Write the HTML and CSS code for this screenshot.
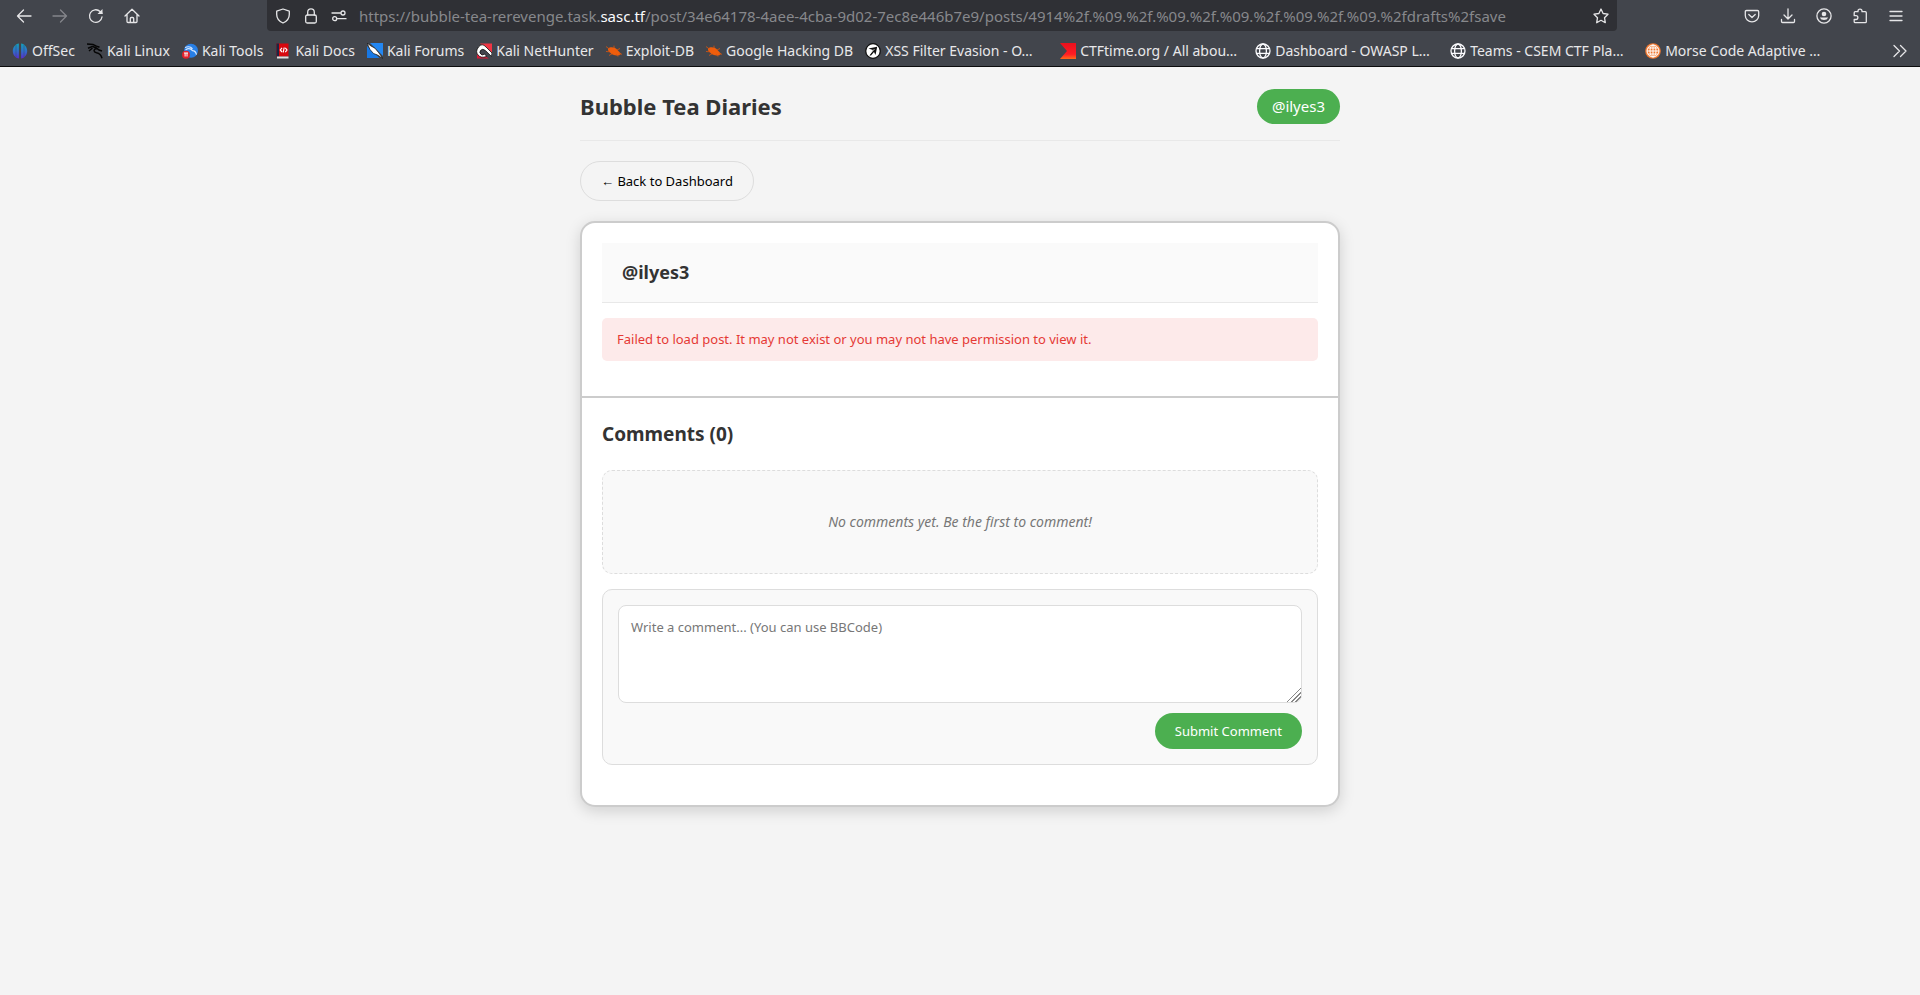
FILE: index.html
```html
<!DOCTYPE html>
<html lang="en">
<head>
<meta charset="utf-8">
<title>Bubble Tea Diaries</title>
<link rel="stylesheet" href="styles.css">
</head>
<body>
<svg class="defs" aria-hidden="true">
  <defs>
    <linearGradient id="offsec" x1="0" y1="0" x2="0" y2="1"><stop offset="0" stop-color="#12a0b8"/><stop offset=".5" stop-color="#2f6fc9"/><stop offset="1" stop-color="#5a2bd0"/></linearGradient>
    <linearGradient id="ctf" x1="0" y1="0" x2="0" y2="1"><stop offset="0" stop-color="#e8101c"/><stop offset=".7" stop-color="#ff1c24"/><stop offset="1" stop-color="#ff6a1a"/></linearGradient>
    <symbol id="globe" viewBox="0 0 16 16"><g fill="none" stroke="#fbfbfe" stroke-width="1.3"><circle cx="8" cy="8" r="7"/><ellipse cx="8" cy="8" rx="3.4" ry="7"/><path d="M1.5 5.6h13M1.5 10.4h13"/></g></symbol>
    <symbol id="bug" viewBox="0 0 16 16"><path d="M2 5.500C4.500 3.300 9 4.300 11 6.500l4 4.200-1.600 1.500c-3 1-7.500-.2-9.100-2.400C2.300 8.300 1.800 7 2 5.500z" fill="#ee5d0c"/><path d="M0 3.500l4 3M0 8.500l4 .3M3 12.500l3.500-2M8 5V2.600M11 7l3-1.500M10 11l2 2.600M13 10.500l3 .8" stroke="#d9560f" stroke-width=".8" fill="none"/></symbol>
  </defs>
</svg>
<header class="browser">
  <nav class="toolbar" aria-label="Navigation">
    <div class="nav-buttons">
      <button class="tool" aria-label="Back"><svg viewBox="0 0 16 16"><path d="M15 8H1.500M7.500 2 1.500 8l6 6"/></svg></button>
      <button class="tool dim" aria-label="Forward"><svg viewBox="0 0 16 16"><path d="M1 8h13.500M8.500 2l6 6-6 6"/></svg></button>
      <button class="tool" aria-label="Reload"><svg viewBox="0 0 16 16"><path d="M14 9a6.300 6.300 0 1 1-1.900-5.500L14 5.300"/><path d="M14.500 1v5h-5z" class="solid"/></svg></button>
      <button class="tool" aria-label="Home"><svg viewBox="0 0 16 16"><path d="M1 8l7-6.700L15 8M3 6.500V13.500q0 1 1 1h8q1 0 1-1V6.500M6.300 14.500v-4q0-1 1-1h1.400q1 0 1 1v4"/></svg></button>
    </div>
    <div class="urlbar">
      <svg class="icon" viewBox="0 0 16 16"><path d="M8 1 14.300 3.200V6.500C14.300 10.500 11.500 13.500 8 15 4.500 13.500 1.700 10.500 1.700 6.500V3.200z"/></svg>
      <svg class="icon" viewBox="0 0 16 16"><rect x="2.700" y="7" width="10.600" height="8" rx="1.500"/><path d="M4.700 7V4.200a3.300 3.300 0 0 1 6.600 0V7"/></svg>
      <svg class="icon" viewBox="0 0 16 16"><path d="M1 5h8.500M6.500 10.700H15"/><circle cx="12" cy="5" r="2"/><circle cx="3.700" cy="10.700" r="2"/></svg>
      <div class="url">https://bubble-tea-rerevenge.task.<span class="domain">sasc.tf</span>/post/34e64178-4aee-4cba-9d02-7ec8e446b7e9/posts/4914%2f.%09.%2f.%09.%2f.%09.%2f.%09.%2f.%09.%2fdrafts%2fsave</div>
      <button class="tool star" aria-label="Bookmark this page"><svg viewBox="0 0 16 16"><path d="M8 1l2.100 4.500 4.900.7-3.500 3.500.8 5L8 12.300 3.700 14.700l.8-5L1 6.200l4.900-.7z"/></svg></button>
    </div>
    <div class="actions">
      <button class="tool" aria-label="Save to Pocket"><svg viewBox="0 0 16 16"><path d="M2.500 2.500h11q1.200 0 1.200 1.200V7.500a6.700 6.300 0 0 1-13.400 0V3.700q0-1.200 1.200-1.200zM4.800 6.500 8 9.500l3.200-3"/></svg></button>
      <button class="tool" aria-label="Downloads"><svg viewBox="0 0 16 16"><path d="M8 .8v10M4 7l4 4 4-4M1.500 11.500v2q0 1 1 1h11q1 0 1-1v-2"/></svg></button>
      <button class="tool" aria-label="Account"><svg viewBox="0 0 16 16"><circle cx="8" cy="8" r="7.100"/><circle cx="8" cy="6" r="2.300" class="solid"/><path d="M3.800 9.500h8.400a4.500 4 0 0 1-8.400 0z" class="solid"/></svg></button>
      <button class="tool" aria-label="Extensions"><svg viewBox="0 0 16 16"><path d="M2.200 5.500V4.700q0-1 1-1H6V3a2 1.900 0 0 1 4 0v.7h3.300q1 0 1 1v9q0 1-1 1H3.200q-1 0-1-1v-2.200H4a1.800 1.800 0 0 0 0-3.800H2.200z"/></svg></button>
      <button class="tool" aria-label="Menu"><svg viewBox="0 0 16 16"><path d="M2 3.500h12M2 8h12M2 12.500h12"/></svg></button>
    </div>
  </nav>
  <nav class="bookmarks" aria-label="Bookmarks">
    <a class="bookmark" href="#"><svg viewBox="0 0 16 16"><path d="M6.900.5v15C3.500 15 .8 12 .8 8S3.500 1 6.900.5zM9.100.5v15c3.400-.5 6.100-3.500 6.100-7.500S12.500 1 9.100.5z" fill="url(#offsec)"/><path d="M4 2v12M12 2v12" stroke="#38507e" stroke-width=".6"/></svg><span>OffSec</span></a>
    <a class="bookmark" href="#"><svg viewBox="0 0 16 16"><path d="M0 1l6 .6 3.500 1.500 3 1.200M1 5.200l4.500-1.800M2 8l3.500-3M5.500 3.500C8 4 9.500 4.500 12 7l3 1M9.500 5.500C6 6.500 6.500 9 9.500 9.700c3 .6 4.600 2 5.500 5.500" fill="none" stroke="#050505" stroke-width="1.500"/></svg><span>Kali Linux</span></a>
    <a class="bookmark" href="#"><svg viewBox="0 0 16 16"><circle cx="9" cy="7.800" r="7" fill="#287fe6"/><path d="M3 4.500q5-2 7.500 1.300M3.500 7q4-3 7 .7 3 0 4 4" fill="none" stroke="#d8e9ff" stroke-width="1.200"/><circle cx="4" cy="11.700" r="4" fill="#e3212b"/><path d="M2 10h4M3.100 10v3.500M5 10v3.500" stroke="#fff"/></svg><span>Kali Tools</span></a>
    <a class="bookmark" href="#"><svg viewBox="0 0 16 16"><path d="M1.500.5h12v13h-12z" fill="#d8070e"/><path d="M1.500.5H4v13H1.500z" fill="#1b2541"/><path d="M2 13.500h11.500v2H2z" fill="#dedede"/><path d="M7 4.800 5.300 7 7 9M10.300 4.800 12 7l-1.700 2.200M9.200 4.500 8.200 9.500" fill="none" stroke="#fff" stroke-width="1.200"/></svg><span>Kali Docs</span></a>
    <a class="bookmark" href="#"><svg viewBox="0 0 16 16"><path d="M3 0h13v13z" fill="#2387f2"/><path d="M0 3v12h12.500z" fill="#1878e4"/><path d="M0 0 4 3l4 2.200 3.500 4.300 4.500 6-5.500-3.500-4-1.500L3 6.500z" fill="#fff" stroke="#111" stroke-width=".7"/></svg><span>Kali Forums</span></a>
    <a class="bookmark" href="#"><svg viewBox="0 0 16 16"><path d="M4 .5h12v11z" fill="#f03544"/><path d="M1 9v6.500h12z" fill="#d71935"/><path d="M15.500 13.500 9.600 7.700Q6.500 5 4.500 7.500T6 12L9 11l1.500 2.500Q5 15.500 2 12T2.500 4 10 4l6 6z" fill="#fff" stroke="#111" stroke-width=".8"/></svg><span>Kali NetHunter</span></a>
    <a class="bookmark" href="#"><svg><use href="#bug"/></svg><span>Exploit-DB</span></a>
    <a class="bookmark" href="#"><svg><use href="#bug"/></svg><span>Google Hacking DB</span></a>
    <a class="bookmark" href="#"><svg viewBox="0 0 16 16"><circle cx="8" cy="8" r="7.300" fill="#fff" stroke="#111" stroke-width="1.300"/><path d="M3.500 5.500 12.200 3.700 10.500 12 9 9 6 12.500H4.500L8 7z" fill="#111"/><path d="M9.500 6 5 11" stroke="#fff" stroke-width=".7"/></svg><span class="clipped">XSS Filter Evasion - O…</span></a>
    <a class="bookmark" href="#"><svg viewBox="0 0 16 16"><path d="M0 0h16v16H0l7-8z" fill="url(#ctf)"/></svg><span class="clipped">CTFtime.org / All abou…</span></a>
    <a class="bookmark" href="#"><svg><use href="#globe"/></svg><span class="clipped">Dashboard - OWASP L…</span></a>
    <a class="bookmark" href="#"><svg><use href="#globe"/></svg><span class="clipped">Teams - CSEM CTF Pla…</span></a>
    <a class="bookmark" href="#"><svg viewBox="0 0 16 16"><circle cx="8" cy="8" r="7.800" fill="#f07830"/><g fill="none" stroke="#fff" stroke-width="1"><circle cx="8" cy="8" r="6"/><ellipse cx="8" cy="8" rx="3" ry="6"/><path d="M8 2v12M2 8h12M3 5h10M3 11h10"/></g></svg><span class="clipped">Morse Code Adaptive …</span></a>
    <button class="tool overflow" aria-label="More bookmarks"><svg viewBox="0 0 16 16"><path d="M2 2.500 7.500 8 2 13.500M8.500 2.500 14 8l-5.500 5.500"/></svg></button>
  </nav>
</header>
<main class="page">
  <header class="page-header">
    <h1>Bubble Tea Diaries</h1>
    <a class="user-pill" href="#">@ilyes3</a>
  </header>
  <button class="back">← Back to Dashboard</button>
  <article class="card">
    <section class="post">
      <h3 class="author">@ilyes3</h3>
      <p class="error">Failed to load post. It may not exist or you may not have permission to view it.</p>
    </section>
    <section class="comments">
      <h2>Comments (0)</h2>
      <p class="empty">No comments yet. Be the first to comment!</p>
      <form class="comment-form">
        <textarea aria-label="Comment" placeholder="Write a comment... (You can use BBCode)"></textarea>
        <button type="button" class="submit">Submit Comment</button>
      </form>
    </section>
  </article>
</main>
</body>
</html>
```
FILE: styles.css
```css
* { box-sizing: border-box; }
body {
  margin: 0;
  min-height: 100vh;
  background: #f4f4f4;
  color: #333;
  font-family: "Noto Sans", sans-serif;
  font-size: 13px;
}
h1, h2, h3, p { margin: 0; }
button, textarea { font: inherit; }
button { cursor: pointer; }
.defs { position: absolute; width: 0; height: 0; }

.browser {
  background: #42454c;
  border-bottom: 1px solid #0c0c0d;
  color: #e8e8ea;
}
.toolbar { display: flex; height: 31px; }
.tool {
  display: flex;
  padding: 0;
  border: 0;
  background: none;
}
.tool svg, .icon {
  width: 16px;
  height: 16px;
  flex: none;
  fill: none;
  stroke: #e6e6e8;
  stroke-width: 1.3;
  stroke-linecap: round;
  stroke-linejoin: round;
}
.tool .solid { fill: #e6e6e8; stroke: none; }
.dim { opacity: 0.4; }
.nav-buttons {
  display: flex;
  align-items: center;
  gap: 20px;
  width: 267px;
  padding-left: 16px;
}
.urlbar {
  display: flex;
  flex: 1;
  min-width: 0;
  align-items: center;
  gap: 12px;
  padding: 0 8px;
  background: #2f3035;
  border-radius: 0 0 4px 4px;
}
.url {
  flex: 1;
  min-width: 0;
  overflow: hidden;
  white-space: nowrap;
  font-size: 15px;
  line-height: 24px;
  color: #87888c;
}
.domain { color: #fbfbfe; }
.actions {
  display: flex;
  align-items: center;
  justify-content: flex-end;
  gap: 20px;
  width: 303px;
  padding-right: 16px;
}
.bookmarks {
  display: flex;
  align-items: center;
  gap: 12px;
  height: 35px;
  padding: 4px 12px 0;
}
.bookmark {
  display: flex;
  align-items: center;
  gap: 4px;
  color: inherit;
  font-size: 14px;
  line-height: 20px;
  text-decoration: none;
  white-space: nowrap;
}
.bookmark svg { width: 16px; height: 16px; flex: none; }
.clipped { width: 163px; }
.overflow { margin-left: auto; }

.page { max-width: 800px; margin: 0 auto; padding: 20px; }
.page-header {
  display: flex;
  justify-content: space-between;
  align-items: center;
  margin-bottom: 20px;
  padding-bottom: 15px;
  border-bottom: 1px solid #e8e8e8;
}
h1 { font-size: 22px; line-height: 38px; }
.user-pill {
  padding: 5px 15px;
  border-radius: 20px;
  background: #4caf50;
  color: #fff;
  font-size: 15px;
  line-height: 25px;
  text-decoration: none;
}
.back {
  height: 40px;
  padding: 0 20px;
  border: 1px solid #ddd;
  border-radius: 20px;
  background: none;
  color: #000;
}
.card {
  margin-top: 20px;
  border: 2px solid #ccc;
  border-radius: 15px;
  background: #fff;
  box-shadow: 0 4px 15px rgba(0, 0, 0, 0.15);
}
.post { padding: 20px 20px 35px; border-bottom: 2px solid #ccc; }
.author {
  padding: 15px 20px;
  border-bottom: 1px solid #e8e8e8;
  background: #fafafa;
  font-size: 18px;
  line-height: 29px;
}
.error {
  margin-top: 15px;
  padding: 10px 15px;
  border-radius: 5px;
  background: #fdeaea;
  color: #e53935;
  line-height: 23px;
}
.comments { padding: 20px 20px 40px; }
h2 { font-size: 19px; line-height: 32px; }
.empty {
  margin: 20px 0 15px;
  padding: 40px 20px;
  border: 1px dashed #ddd;
  border-radius: 10px;
  background: #f9f9f9;
  color: #777;
  font-size: 14px;
  font-style: italic;
  line-height: 22px;
  text-align: center;
}
.comment-form {
  display: flex;
  flex-direction: column;
  gap: 10px;
  padding: 15px;
  border: 1px solid #ddd;
  border-radius: 10px;
  background: #f9f9f9;
}
textarea {
  height: 98px;
  padding: 12px;
  border: 1px solid #ddd;
  border-radius: 8px;
  background: #fff;
  resize: vertical;
}
textarea::placeholder { color: #777; }
textarea::-webkit-resizer {
  background: linear-gradient(135deg, transparent 50%, #888 50% 56%, transparent 56% 64%, #888 64% 70%, transparent 70% 78%, #888 78% 84%, transparent 84%);
}
.submit {
  align-self: flex-end;
  height: 36px;
  padding: 0 20px;
  border: 0;
  border-radius: 20px;
  background: #4caf50;
  color: #fff;
}
```
